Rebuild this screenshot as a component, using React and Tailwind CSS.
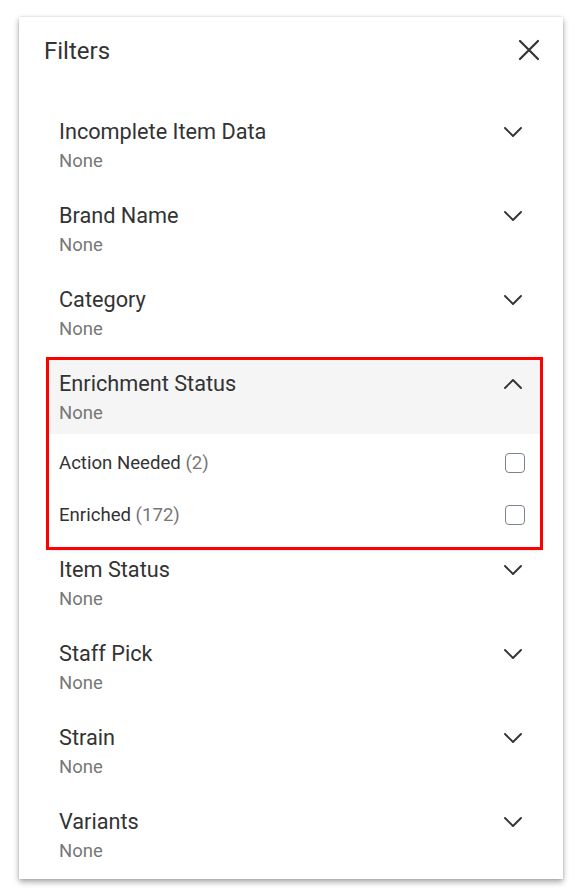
import { useState } from 'react'

const filters = [
  { id: 'incomplete', title: 'Incomplete Item Data' },
  { id: 'brand', title: 'Brand Name' },
  { id: 'category', title: 'Category' },
  {
    id: 'enrichment', title: 'Enrichment Status', open: true,
    options: [
      { label: 'Action Needed', count: 2 },
      { label: 'Enriched', count: 172 },
    ],
  },
  { id: 'status', title: 'Item Status' },
  { id: 'staff', title: 'Staff Pick' },
  { id: 'strain', title: 'Strain' },
  { id: 'variants', title: 'Variants' },
]

function Chevron({ up }) {
  return (
    <svg width="32" height="32" viewBox="0 0 32 32" fill="none" stroke="#333" strokeWidth="1.9" strokeLinecap="round" strokeLinejoin="round">
      {up ? <path d="M8 20l8-8 8 8" /> : <path d="M8 12l8 8 8-8" />}
    </svg>
  )
}

function Summary({ title, up }) {
  return (
    <div className="flex justify-between pl-[10px] pr-[11px] pt-[8px]">
      <div>
        <p className="text-[21.7px] leading-[30px] text-[#333]">{title}</p>
        <p className="text-[18.5px] leading-[28px] text-[#777]">None</p>
      </div>
      <div className="mt-[-1px]">
        <Chevron up={up} />
      </div>
    </div>
  )
}

export default function App() {
  const [checked, setChecked] = useState({})
  return (
    <div className="min-h-screen bg-white pl-[19px] pt-[17px]" style={{ fontFamily: 'Roboto, "Liberation Sans", sans-serif' }}>
      <div className="w-[544px] h-[862px] overflow-hidden bg-white shadow-[0_3px_6px_rgba(0,0,0,0.35),0_0_2px_rgba(0,0,0,0.15)]">
        <div className="flex h-[66px] items-center justify-between pl-[25px] pr-[23px]">
          <h2 className="text-[24px] text-[#333] mt-[1px]">Filters</h2>
          <svg width="22" height="22" viewBox="0 0 22 22" fill="none" stroke="#333" strokeWidth="2.2" strokeLinecap="round">
            <path d="M2 2l18 18M20 2L2 20" />
          </svg>
        </div>
        <div className="pt-[26px] pl-[30px] pr-[23px]">
          {filters.map(f => f.open ? (
            <div key={f.id} className="relative bg-white shadow-[0_2px_4px_rgba(0,0,0,0.25)]">
              <div className="h-[73px] bg-[#f5f5f5]">
                <Summary title={f.title} up />
              </div>
              <div className="pt-[3px] pb-[6px]">
                {f.options.map(o => (
                  <label key={o.label} className="flex h-[52px] items-center justify-between pl-[10px] pr-[15px] cursor-pointer">
                    <span className="text-[18.6px] text-[#333] mt-[1px]">
                      {o.label} <span className="text-[#777]">({o.count})</span>
                    </span>
                    <input
                      type="checkbox"
                      checked={!!checked[o.label]}
                      onChange={() => setChecked(c => ({ ...c, [o.label]: !c[o.label] }))}
                      className="h-5 w-5 appearance-none rounded-[4px] border-[1.5px] border-[#7a8294] bg-white"
                    />
                  </label>
                ))}
              </div>
              <div className="pointer-events-none absolute -left-[3px] -right-[3px] -top-[4px] -bottom-[3px] border-[3px] border-[#ff0000]" />
            </div>
          ) : (
            <div key={f.id} className="h-[84px]">
              <Summary title={f.title} />
            </div>
          ))}
        </div>
      </div>
    </div>
  )
}
